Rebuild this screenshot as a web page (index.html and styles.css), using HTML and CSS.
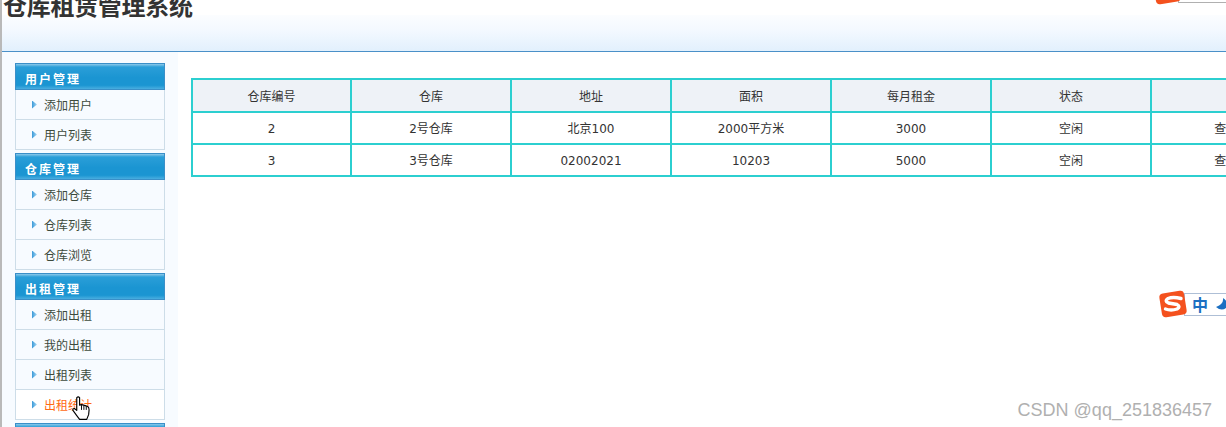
FILE: index.html
```html
<!DOCTYPE html>
<html>

<head>
    <meta name="viewport" content="width=device-width, initial-scale=1">
    <link rel="stylesheet" href="styles.css">
</head>

<body>
    <div id="wrapper">
        <div id="top">
            <h1 id="title">仓库租赁管理系统</h1>
            <div id="topband"></div>
        </div>
        <div id="content">
            <div id="side">
                <div class="menu">
                    <h2 class="menuhead">用户管理</h2>
                    <a class="menuitem"><span class="arrow"></span>添加用户</a>
                    <a class="menuitem"><span class="arrow"></span>用户列表</a>
                </div>
                <div class="menu">
                    <h2 class="menuhead">仓库管理</h2>
                    <a class="menuitem"><span class="arrow"></span>添加仓库</a>
                    <a class="menuitem"><span class="arrow"></span>仓库列表</a>
                    <a class="menuitem"><span class="arrow"></span>仓库浏览</a>
                </div>
                <div class="menu">
                    <h2 class="menuhead">出租管理</h2>
                    <a class="menuitem"><span class="arrow"></span>添加出租</a>
                    <a class="menuitem"><span class="arrow"></span>我的出租</a>
                    <a class="menuitem"><span class="arrow"></span>出租列表</a>
                    <a class="menuitem hover"><span class="arrow"></span>出租统计</a>
                </div>
                <div class="menu">
                    <h2 class="menuhead"></h2>
                </div>
            </div>
            <div id="main">
                <table id="list">
                    <tr>
                        <th class="first">仓库编号</th>
                        <th>仓库</th>
                        <th>地址</th>
                        <th>面积</th>
                        <th>每月租金</th>
                        <th>状态</th>
                        <th class="ops"></th>
                    </tr>
                    <tr>
                        <td class="first">2</td>
                        <td>2号仓库</td>
                        <td>北京100</td>
                        <td>2000平方米</td>
                        <td>3000</td>
                        <td>空闲</td>
                        <td class="ops">查看 修改 删除</td>
                    </tr>
                    <tr>
                        <td class="first">3</td>
                        <td>3号仓库</td>
                        <td>02002021</td>
                        <td>10203</td>
                        <td>5000</td>
                        <td>空闲</td>
                        <td class="ops">查看 修改 删除</td>
                    </tr>
                </table>
            </div>
        </div>
    </div>

    <!-- things floating over the page -->
    <div class="sogou sogou-top">
        <svg class="sogou-logo" viewBox="0 0 30 30">
            <rect x="2.500" y="3" width="25" height="24" rx="4" transform="rotate(-9 15 15)" fill="#f4511e" />
            <path d="M23 9.500 Q15 7.500 10 9.500 Q6 12 10.500 14 L19 15.500 Q23 17.500 19 20 Q13 22 7.500 20" fill="none" stroke="#fff" stroke-width="3.400" stroke-linecap="round" />
        </svg>
        <div class="sogou-bar">
            <span class="sogou-zh">中</span>
            <svg class="sogou-moon" viewBox="0 0 14 14"><path d="M8 1 Q9 7 1 10 Q7 15 12 10 Q14 5 8 1 Z" fill="#1b6fc2" /></svg>
        </div>
    </div>
    <div class="sogou sogou-low">
        <svg class="sogou-logo" viewBox="0 0 30 30">
            <rect x="2.500" y="3" width="25" height="24" rx="4" transform="rotate(-9 15 15)" fill="#f4511e" />
            <path d="M23 9.500 Q15 7.500 10 9.500 Q6 12 10.500 14 L19 15.500 Q23 17.500 19 20 Q13 22 7.500 20" fill="none" stroke="#fff" stroke-width="3.400" stroke-linecap="round" />
        </svg>
        <div class="sogou-bar">
            <span class="sogou-zh">中</span>
            <svg class="sogou-moon" viewBox="0 0 14 14"><path d="M8 1 Q9 7 1 10 Q7 15 12 10 Q14 5 8 1 Z" fill="#1b6fc2" /></svg>
        </div>
    </div>
    <svg id="hand" viewBox="0 0 20 26">
        <path d="M5 2 Q6.500 .5 8 2 L8 10 L10 9.500 L12 10 L14 10.500 L16.500 11.500 Q18 12.500 18 15 L17.500 20 L15.500 25 L8 25 L5 21 L1 15.500 Q.5 13.500 2.500 13.500 L5 15.500 Z" fill="#fff" stroke="#000" stroke-width="1.200" stroke-linejoin="round" />
        <path d="M10 10 V15 M12.500 10.500 V15 M15 11 V15" stroke="#000" stroke-width="1" fill="none" />
    </svg>
    <div id="mark">CSDN @qq_251836457</div>
</body>

</html>
```
FILE: styles.css
```css
html,
body {
    margin: 0;
    height: 100%;
    overflow: hidden;
    background-color: white;
}

body {
    font-family: "DejaVu Sans", "Noto Sans CJK SC", sans-serif;
    font-size: 12px;
    color: #333;
}

#wrapper {
    display: flex;
    flex-direction: column;
    height: 100%;
    border-left: 2px solid #b9b9b9;
}

/* Header */
#top {
    height: 52px;
    flex: none;
    display: flex;
    flex-direction: column;
    border-bottom: 1px solid #4a90c8;
    box-sizing: border-box;
}

#title {
    position: relative;
    z-index: 1;
    margin: -8px 0 0 1px;
    height: 23px;
    line-height: 26px;
    font-family: "Noto Sans CJK SC", sans-serif;
    font-size: 24px;
    font-weight: bold;
    letter-spacing: -0.3px;
    color: #333;
    white-space: nowrap;
}

#topband {
    flex: 1;
    background: linear-gradient(#fbfdff, #f4f9ff 40%, #e2f0fd);
}

#content {
    flex: 1;
    display: flex;
    min-height: 0;
}

/* Left menu */
#side {
    width: 150px;
    flex: none;
    padding: 11px 13px 0 13px;
    background-color: #f7fbff;
    display: flex;
    flex-direction: column;
    gap: 3px;
    overflow: hidden;
}

.menu {
    flex: none;
}

.menuhead {
    margin: 0;
    height: 27px;
    box-sizing: border-box;
    padding: 5px 0 0 9px;
    border: 1px solid #3a8fc8;
    background: linear-gradient(#8cc9ea, #2a9ed8 3px, #1b95d2 55%, #1b95d2 85%, #4aaee0);
    color: white;
    font-family: "Noto Sans CJK SC", sans-serif;
    font-size: 12px;
    font-weight: bold;
    letter-spacing: 2px;
    line-height: 20px;
}

.menuitem {
    display: flex;
    align-items: center;
    height: 30px;
    box-sizing: border-box;
    padding-left: 16px;
    border: 1px solid #cddde8;
    border-top: none;
    background-color: #f7fbff;
    color: #3c4a3c;
    font-family: "Noto Sans CJK SC", sans-serif;
    font-size: 12px;
}

.menuitem.hover {
    background-color: white;
    color: #ff6a13;
}

.arrow {
    width: 5px;
    height: 8px;
    margin: 0 7px 0 0;
    background: linear-gradient(to right, #3a9ad8, #a8d8f4);
    clip-path: polygon(0 0, 100% 50%, 0 100%);
}

/* Table */
#main {
    flex: 1;
    padding: 26px 0 0 13px;
    min-width: 0;
}

#list {
    border-collapse: separate;
    border-spacing: 0;
    table-layout: fixed;
    width: 1167px;
    border-top: 2px solid #2ccfd0;
    border-left: 2px solid #2ccfd0;
}

#list th,
#list td {
    width: 160px;
    box-sizing: border-box;
    border-right: 2px solid #2ccfd0;
    border-bottom: 2px solid #2ccfd0;
    padding: 2px 0 0 0;
    text-align: center;
    font-weight: normal;
    height: 32px;
    font-size: 12px;
    line-height: 16px;
    color: #333;
}

#list th {
    background-color: #eef2f7;
    height: 33px;
}

#list .first {
    width: 159px;
}

#list .ops {
    width: 206px;
}

/* Input method bar and the rest of the overlays */
.sogou {
    position: absolute;
    display: flex;
    align-items: center;
    left: 1158px;
    width: 68px;
    height: 30px;
    overflow: hidden;
}

.sogou-top {
    top: -24px;
    left: 1152px;
    width: 74px;
}

.sogou-top .sogou-bar {
    border-color: #b0b0b0;
}

.sogou-low {
    top: 289px;
}

.sogou-logo {
    width: 30px;
    height: 30px;
    flex: none;
    position: relative;
    z-index: 1;
}

.sogou-bar {
    flex: 1;
    height: 21px;
    margin-left: -4px;
    padding-left: 7px;
    border: 1px solid #aebfd6;
    border-right: none;
    display: flex;
    align-items: center;
    gap: 7px;
    background-color: white;
}

.sogou-zh {
    font-family: "Noto Sans CJK SC", sans-serif;
    font-size: 16px;
    font-weight: bold;
    color: #1b6fc2;
}

.sogou-moon {
    width: 14px;
    height: 14px;
    flex: none;
}

#hand {
    position: absolute;
    left: 72px;
    top: 395px;
    width: 19px;
    height: 26px;
}

#mark {
    position: absolute;
    right: 14px;
    top: 400px;
    font-family: "Liberation Sans", sans-serif;
    font-size: 18px;
    color: #b0b0b0;
    white-space: nowrap;
}
```
